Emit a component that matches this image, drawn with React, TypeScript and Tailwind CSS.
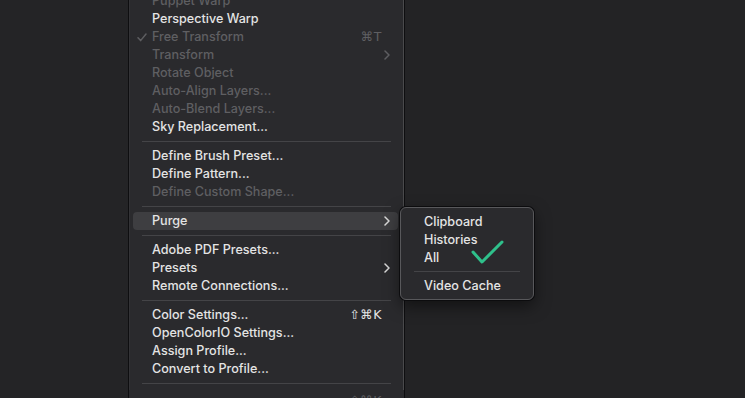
import React from "react";

type Item =
  | { sep: true; last?: boolean }
  | {
      label: string;
      dim?: boolean;
      check?: boolean;
      shortcut?: string;
      sub?: boolean;
      active?: boolean;
    };

const items: Item[] = [
  { label: "Puppet Warp", dim: true },
  { label: "Perspective Warp" },
  { label: "Free Transform", dim: true, check: true, shortcut: "⌘T" },
  { label: "Transform", dim: true, sub: true },
  { label: "Rotate Object", dim: true },
  { label: "Auto-Align Layers...", dim: true },
  { label: "Auto-Blend Layers...", dim: true },
  { label: "Sky Replacement..." },
  { sep: true },
  { label: "Define Brush Preset..." },
  { label: "Define Pattern..." },
  { label: "Define Custom Shape...", dim: true },
  { sep: true },
  { label: "Purge", sub: true, active: true },
  { sep: true },
  { label: "Adobe PDF Presets..." },
  { label: "Presets", sub: true },
  { label: "Remote Connections..." },
  { sep: true },
  { label: "Color Settings...", shortcut: "⇧⌘K" },
  { label: "OpenColorIO Settings..." },
  { label: "Assign Profile..." },
  { label: "Convert to Profile..." },
  { sep: true, last: true },
  { label: "", dim: true, shortcut: "⌥⇧⌘K" },
];

const Chevron = ({ dim }: { dim?: boolean }) => (
  <svg width="6" height="10" viewBox="0 0 6 10" className="mr-[8px] shrink-0">
    <polyline
      points="1,1 5,5 1,9"
      fill="none"
      stroke={dim ? "#5e5e61" : "#d8d8d8"}
      strokeWidth="1.5"
      strokeLinecap="round"
      strokeLinejoin="round"
    />
  </svg>
);

const Check = () => (
  <svg width="10" height="9" viewBox="0 0 10 9" className="absolute left-[4px] top-[5px]">
    <polyline
      points="1,4.8 3.6,7.6 9,1"
      fill="none"
      stroke="#5e5e61"
      strokeWidth="1.5"
      strokeLinecap="round"
      strokeLinejoin="round"
    />
  </svg>
);

export default function App() {
  return (
    <div
      className="relative w-[745px] h-[398px] overflow-hidden bg-[#232325] flex"
      style={{ fontFamily: "Inter, 'Noto Sans', 'DejaVu Sans', sans-serif" }}
    >
      <div className="w-[128px] shrink-0 bg-[#242426]" />
      <div className="w-[277px] shrink-0 border-x border-[#0e0e10] bg-[#2a2a2d]">
        <div className="h-full border-l border-[#333336] border-r border-r-[#4a4a4c]">
          <div className="-mt-[8px] flex flex-col">
            {items.map((it, i) =>
              "sep" in it ? (
                <div
                  key={i}
                  className={
                    "mx-[12px] h-px bg-[#444447] " +
                    (it.last ? "mt-[5px] mb-[8px]" : "mt-[5px] mb-[5px]")
                  }
                />
              ) : (
                <div
                  key={i}
                  className={
                    "relative ml-[3px] mr-[5px] h-[18px] flex items-center pl-[19px] rounded-[4px] text-[12.6px] font-medium leading-[18px] " +
                    (it.active ? "bg-[#3e3e41] " : "") +
                    (it.dim ? "text-[#5f5f62]" : "text-[#e4e4e4]")
                  }
                >
                  {it.check && <Check />}
                  <span className="whitespace-nowrap">{it.label}</span>
                  <div className="ml-auto flex items-center">
                    {it.shortcut && (
                      <span
                        className="pr-[16px] text-[12.5px] tracking-[0.5px]"
                        style={{ fontFamily: "'DejaVu Sans', Inter, sans-serif" }}
                      >
                        {it.shortcut}
                      </span>
                    )}
                    {it.sub && <Chevron dim={it.dim} />}
                  </div>
                </div>
              )
            )}
          </div>
        </div>
      </div>
      <div className="flex-1" />

      {/* Submenu */}
      <div className="absolute left-[400px] top-[207px] w-[134px] h-[93px] rounded-[6px] border border-[#58585b] bg-[#2a2a2d] shadow-[0_0_0_1px_#0c0c0e,0_6px_16px_rgba(0,0,0,0.5)] pt-[5px] flex flex-col text-[12.6px] font-medium leading-[18px] text-[#e4e4e4]">
        <div className="h-[18px] pl-[23px] flex items-center">Clipboard</div>
        <div className="h-[18px] pl-[23px] flex items-center">Histories</div>
        <div className="h-[18px] pl-[23px] flex items-center">All</div>
        <div className="ml-[13px] mr-[13px] mt-[4px] mb-[5px] h-px bg-[#444447]" />
        <div className="h-[18px] pl-[23px] flex items-center">Video Cache</div>
        <svg
          width="36"
          height="26"
          viewBox="0 0 36 26"
          className="absolute left-[69px] top-[31px]"
        >
          <polyline
            points="3,13 12,23 32,3"
            fill="none"
            stroke="#2fc08b"
            strokeWidth="3"
            strokeLinecap="round"
            strokeLinejoin="round"
          />
        </svg>
      </div>
    </div>
  );
}
